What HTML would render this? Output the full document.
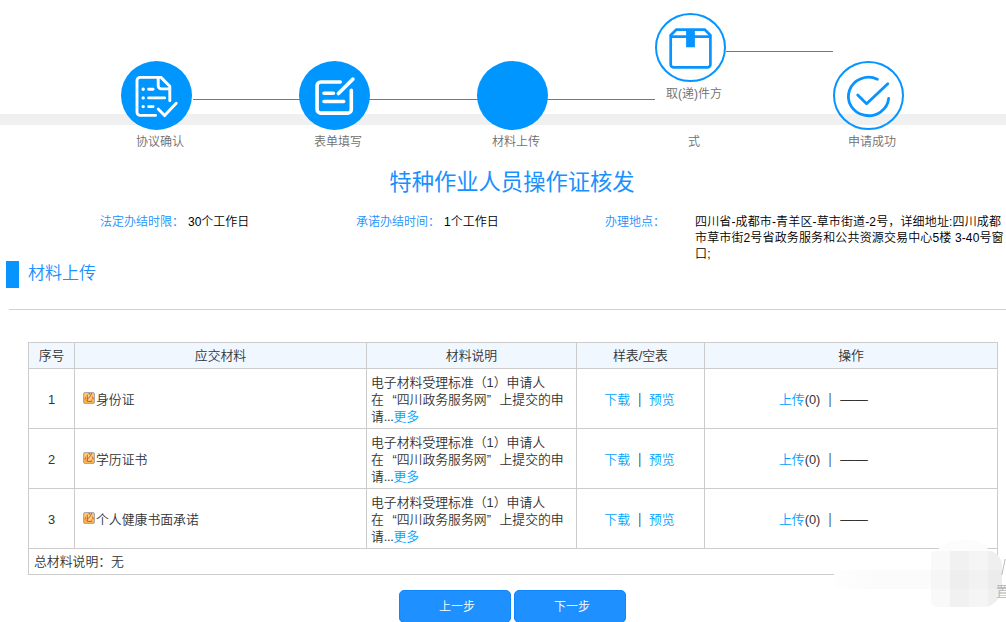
<!DOCTYPE html>
<html lang="zh-CN">
<head>
<meta charset="utf-8">
<title>特种作业人员操作证核发</title>
<style>
*{box-sizing:border-box;margin:0;padding:0}
html,body{width:1006px;height:622px;overflow:hidden;background:#fff}
body{font-weight:350;position:relative;font-family:"Liberation Sans","Noto Sans CJK SC",sans-serif;font-size:12px;color:#000}
.abs{position:absolute}
/* steps */
.lb{position:absolute;width:100px;text-align:center;font-size:12px;line-height:16px;color:#6e6e6e;white-space:nowrap}
/* title */
.title{position:absolute;left:0;top:167px;width:1024px;text-align:center;font-size:22.3px;line-height:32px;color:#1890ff;font-weight:400}
.info{position:absolute;font-size:12px;line-height:16px;white-space:nowrap}
.info.b{color:#1890ff}
/* section */
.sbar{position:absolute;left:6px;top:261px;width:13px;height:27px;background:#0894ff}
.stitle{position:absolute;left:28px;top:261px;font-size:17px;line-height:26px;color:#1890ff;white-space:nowrap}
.sline{position:absolute;left:9px;top:309px;width:997px;height:1px;background:#a9dcff}
/* table */
table{position:absolute;left:28px;top:342px;border-collapse:collapse;table-layout:fixed;width:969px;font-size:12.85px;color:#333}
td,th{border:1px solid #ccc;font-weight:350;vertical-align:middle;text-align:center;line-height:16px;padding:0}
th{height:26px;background:#f0f7ff}
tr.r td{height:60px;padding-top:2px}
td.l{text-align:left}
a{color:#00a2ff;text-decoration:none}
.bi{display:inline-block;width:12px;height:12px;vertical-align:0;background:radial-gradient(circle at 50% 35%,#fee3a4 0,#fbc163 60%,#f6a647 100%);border:1px solid #aaa;border-radius:2px;color:#dc3a1a;font-family:"Liberation Serif","Noto Serif CJK SC",serif;font-size:10px;font-weight:500;line-height:9px;text-align:center;overflow:hidden;margin-right:1px}
.q{display:inline-block;width:12.85px;line-height:0}
.q.o{text-align:right}
.q.c{text-align:left}
.pp{display:inline-block;padding:0 8px;font-size:15px;line-height:0;font-weight:400;transform:scaleX(.65);color:#222}
.pp.n{padding:0 7px 0 8px}
.dots{letter-spacing:-.4px}
.dash{line-height:0;font-size:13.800px;letter-spacing:0;position:relative;top:0;font-weight:400}
.btn{position:absolute;top:590px;height:33px;width:112px;background:#1e90ff;border:1px solid #0f86ff;border-radius:5px;color:#fff;font-size:12px;line-height:33px;text-align:center;padding-left:4px}
</style>
</head>
<body>
<!-- step bar -->
<svg class="abs" style="left:0;top:0" width="1006" height="160" viewBox="0 0 1006 160" fill="none">
<rect x="0" y="114" width="1006" height="11" fill="#f0f0f0"/>
<rect x="193" y="99" width="462" height="1" fill="#0a94ff"/>
<rect x="726" y="51" width="107" height="1" fill="#0a94ff"/>
<!-- 1 -->
<ellipse cx="156.500" cy="95.500" rx="35.500" ry="34.500" fill="#0096ff"/>
<g transform="translate(121,61)" stroke="#fff" stroke-width="2.900" stroke-linecap="round" stroke-linejoin="round">
<path d="M34.600 54.400 H19.200 a3.200 3.200 0 0 1 -3.200 -3.200 V19.600 a3.200 3.200 0 0 1 3.200 -3.200 H40 L48.800 25.200 V39.800"/>
<path d="M37.200 17 V24.700 a3.200 3.200 0 0 0 3.200 3.200 H48.500"/>
<path d="M27.600 28.200 H32.100 M27.600 36.900 H43.600 M27.600 45.600 H32.100"/>
<path d="M37.200 48.100 L43.600 54.600 L55.200 42.300"/>
<path d="M22.200 28.200 h0.010 M22.200 36.900 h0.010 M22.200 45.600 h0.010" stroke-width="3.400"/>
</g>
<!-- 2 -->
<ellipse cx="334.500" cy="95.500" rx="35.500" ry="34.500" fill="#0096ff"/>
<g transform="translate(299,61)" stroke="#fff" stroke-width="3.600" stroke-linecap="round" stroke-linejoin="round">
<path d="M41.200 21 H21.800 a3.700 3.700 0 0 0 -3.700 3.700 V48.400 a3.700 3.700 0 0 0 3.700 3.700 H48.600 a3.700 3.700 0 0 0 3.700 -3.700 V29.200"/>
<path d="M39.400 32.500 L53.900 18.100"/>
<path d="M25 32.300 H34.400 M25 40.500 H44.700"/>
</g>
<!-- 3 -->
<ellipse cx="512.500" cy="95.500" rx="35.500" ry="34.500" fill="#0096ff"/>
<!-- 4 -->
<ellipse cx="690.500" cy="47.500" rx="34.500" ry="33.500" fill="none" stroke="#0894ff" stroke-width="2"/>
<g transform="translate(655,13)" stroke="#0894ff" stroke-width="2.700" stroke-linejoin="round">
<path d="M15.700 23.600 V51.400 a3 3 0 0 0 3 3 H52.400 a3 3 0 0 0 3 -3 V23.600 Z"/>
<path d="M15.700 23.600 V22.300 L21.200 16.700 H49.900 L55.400 22.300 V23.600"/>
<rect x="31.100" y="16.700" width="8.800" height="17.600" fill="#0894ff" stroke="none"/>
</g>
<!-- 5 -->
<ellipse cx="868.500" cy="95.500" rx="34.500" ry="33.500" fill="none" stroke="#0894ff" stroke-width="2"/>
<g transform="translate(833,61)" stroke="#0894ff" stroke-width="2.800" stroke-linecap="round" stroke-linejoin="round">
<path d="M44.400 18.200 A20.200 19.200 0 1 0 55.700 37.400"/>
<path d="M24.700 34.100 L33.600 42.800 L54.800 22.800"/>
</g>
</svg>

<div class="lb" style="left:110px;top:134px">协议确认</div>
<div class="lb" style="left:288px;top:134px">表单填写</div>
<div class="lb" style="left:466px;top:134px">材料上传</div>
<div class="lb" style="left:644px;top:86px">取(递)件方</div>
<div class="lb" style="left:644px;top:134px">式</div>
<div class="lb" style="left:822px;top:134px">申请成功</div>

<div class="title">特种作业人员操作证核发</div>

<div class="info b" style="left:100px;top:214px">法定办结时限：</div>
<div class="info" style="left:188px;top:214px">30个工作日</div>
<div class="info b" style="left:356px;top:214px">承诺办结时间：</div>
<div class="info" style="left:444px;top:214px">1个工作日</div>
<div class="info b" style="left:605px;top:214px">办理地点：</div>
<div class="info" style="left:695px;top:214px;letter-spacing:.14px">四川省-成都市-青羊区-草市街道-2号，详细地址:四川成都<br>市草市街2号省政务服务和公共资源交易中心5楼 3-40号窗<br>口;</div>

<div class="sbar"></div>
<div class="stitle">材料上传</div>
<div class="sline"></div>

<table>
<colgroup><col style="width:46px"><col style="width:292px"><col style="width:210px"><col style="width:128px"><col style="width:293px"></colgroup>
<tr><th>序号</th><th>应交材料</th><th>材料说明</th><th>样表/空表</th><th>操作</th></tr>
<tr class="r"><td>1</td><td class="l" style="padding-left:8px"><span class="bi">必</span>身份证</td><td class="l" style="padding:2px 0 0 4px;line-height:17px">电子材料受理标准（1）申请人<br>在<span class="q o">“</span>四川政务服务网<span class="q c">”</span>上提交的申<br>请<span class="dots">...</span><a>更多</a></td><td style="padding-right:2px"><a>下载</a><span class="pp n">|</span><a>预览</a></td><td class="l" style="padding-left:74px"><a>上传</a>(0)<span class="pp">|</span><span class="dash">——</span></td></tr>
<tr class="r"><td>2</td><td class="l" style="padding-left:8px"><span class="bi">必</span>学历证书</td><td class="l" style="padding:2px 0 0 4px;line-height:17px">电子材料受理标准（1）申请人<br>在<span class="q o">“</span>四川政务服务网<span class="q c">”</span>上提交的申<br>请<span class="dots">...</span><a>更多</a></td><td style="padding-right:2px"><a>下载</a><span class="pp n">|</span><a>预览</a></td><td class="l" style="padding-left:74px"><a>上传</a>(0)<span class="pp">|</span><span class="dash">——</span></td></tr>
<tr class="r"><td>3</td><td class="l" style="padding-left:8px"><span class="bi">必</span>个人健康书面承诺</td><td class="l" style="padding:2px 0 0 4px;line-height:17px">电子材料受理标准（1）申请人<br>在<span class="q o">“</span>四川政务服务网<span class="q c">”</span>上提交的申<br>请<span class="dots">...</span><a>更多</a></td><td style="padding-right:2px"><a>下载</a><span class="pp n">|</span><a>预览</a></td><td class="l" style="padding-left:74px"><a>上传</a>(0)<span class="pp">|</span><span class="dash">——</span></td></tr>
<tr><td colspan="5" class="l" style="height:26px;padding-left:5px">总材料说明：无</td></tr>
</table>

<!-- blurred floating widget at bottom right -->
<div class="abs" style="left:833px;top:570px;width:100px;height:19px;background:linear-gradient(to right,#fefefe,#fbfbfb 40%);border-radius:9px 0 0 12px"></div>
<div class="abs" style="left:938px;top:540px;width:50px;height:14px;background:#fcfcfc;border-radius:30px 22px 0 0/12px 11px 0 0"></div>
<div class="abs" style="left:931px;top:551px;width:71px;height:56px;border-radius:5px 13px 18px 8px/5px 16px 22px 6px;overflow:hidden;background:#f5f5f5">
<div class="abs" style="left:0;top:0;width:19px;height:56px;background:#f9f9f9"></div>
<div class="abs" style="left:19px;top:0;width:19px;height:56px;background:#f1f1f1"></div>
<div class="abs" style="left:38px;top:0;width:19px;height:56px;background:#f5f5f5"></div>
<div class="abs" style="left:57px;top:0;width:14px;height:56px;background:#efefef"></div>
<div class="abs" style="left:0;top:19px;width:71px;height:19px;background:rgba(0,0,0,.012)"></div>
</div>
<div class="abs" style="left:996px;top:583px;font-size:14px;line-height:16px;color:#b5b5b5;white-space:nowrap">置</div>
<div class="abs" style="left:1003px;top:559px;width:1.400px;height:16px;background:#bbb;transform:skewX(-12deg)"></div>

<div class="btn" style="left:399px">上一步</div>
<div class="btn" style="left:514px">下一步</div>
</body>
</html>
